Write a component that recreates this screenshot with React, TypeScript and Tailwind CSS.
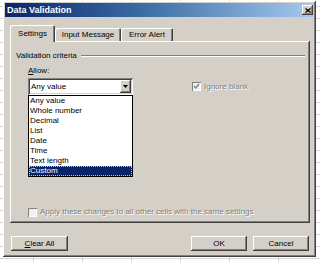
import React from "react";

const raised =
  "shadow-[inset_-1px_-1px_#404040,inset_1px_1px_#ffffff,inset_-2px_-2px_#808080,inset_2px_2px_#d4d0c8]";
const sunken =
  "shadow-[inset_1px_1px_#808080,inset_-1px_-1px_#ffffff,inset_2px_2px_#404040,inset_-2px_-2px_#d4d0c8]";

const options = [
  "Any value",
  "Whole number",
  "Decimal",
  "List",
  "Date",
  "Time",
  "Text length",
  "Custom",
];

const CheckBox = ({ checked }: { checked?: boolean }) => (
  <div
    className={`w-[9px] h-[9px] shrink-0 bg-[#f2f0ec] flex items-center justify-center shadow-[inset_1px_1px_#808080,inset_-1px_-1px_#ffffff]`}
  >
    {checked && (
      <svg width="7" height="7" viewBox="0 0 7 7">
        <polyline
          points="1,3 2.8,5 6,1"
          fill="none"
          stroke="#808080"
          strokeWidth="1.4"
        />
      </svg>
    )}
  </div>
);

const App = () => {
  return (
    <div className="w-[320px] h-[262px] overflow-hidden bg-white bg-[linear-gradient(to_right,#d4d4d4_1px,transparent_1px),linear-gradient(to_bottom,#d4d4d4_1px,transparent_1px)] bg-[size:49px_12px] bg-[position:33px_6px] pt-[1px] pl-[3px] font-['Liberation_Sans',Arial,sans-serif] text-[8px] leading-[10px] text-black">
      {/* Dialog */}
      <div
        className={`w-[313px] h-[256px] bg-[#d4d0c8] p-[2px] flex flex-col ${raised}`}
      >
        {/* Title bar */}
        <div className="h-[14px] flex items-center justify-between pl-[2px] pr-[1px] bg-[linear-gradient(to_right,#0a246a,#3a6ea5_45%,#a6caf0)]">
          <span className="text-white font-bold text-[9px]">Data Validation</span>
          <div
            className={`w-[11px] h-[10px] bg-[#d4d0c8] flex items-center justify-center ${raised}`}
          >
            <svg width="6" height="5" viewBox="0 0 6 5">
              <path d="M0.5 0.5 L5.5 4.5 M5.5 0.5 L0.5 4.5" stroke="#000" strokeWidth="1.3" />
            </svg>
          </div>
        </div>

        {/* Tabs */}
        <div className="mt-[9px] pl-[5px] pr-[4px]">
          <div className="flex items-end h-[15px]">
            <div className="relative z-10 -mb-px h-[17px] w-[45px] bg-[#d4d0c8] rounded-t-[2px] shadow-[inset_1px_1px_#ffffff,inset_-1px_0_#404040,inset_-2px_0_#808080] flex items-center justify-center">
              Settings
            </div>
            <div className="h-[13px] w-[66px] rounded-t-[2px] shadow-[inset_1px_1px_#ffffff,inset_-1px_0_#404040,inset_-2px_0_#808080] flex items-center justify-center">
              Input Message
            </div>
            <div className="h-[13px] w-[52px] rounded-t-[2px] shadow-[inset_1px_1px_#ffffff,inset_-1px_0_#404040,inset_-2px_0_#808080] flex items-center justify-center">
              Error Alert
            </div>
          </div>

          {/* Panel */}
          <div className={`h-[182px] pl-[6px] pr-[5px] pt-[10px] ${raised}`}>
            <div className="flex items-center gap-[4px]">
              <span>Validation criteria</span>
              <div className="flex-1 h-[2px] border-t border-[#808080] border-b border-b-white" />
            </div>

            <div className="pl-[12px] mt-[5px]">
              <div>
                <span className="underline">A</span>llow:
              </div>

              <div className="flex mt-[2px]">
                {/* Combo + list */}
                <div className="w-[105px]">
                  <div className={`h-[17px] bg-white flex items-center pl-[3px] pr-[2px] ${sunken}`}>
                    <span className="flex-1">Any value</span>
                    <div
                      className={`w-[11px] h-[13px] bg-[#d4d0c8] flex items-center justify-center ${raised}`}
                    >
                      <svg width="5" height="3" viewBox="0 0 5 3">
                        <path d="M0 0 H5 L2.5 3 Z" fill="#000" />
                      </svg>
                    </div>
                  </div>
                  <div className="bg-white border border-black">
                    {options.map((o) =>
                      o === "Custom" ? (
                        <div
                          key={o}
                          className="h-[10px] pl-[1px] bg-[#0a246a] text-white outline-1 outline-dotted outline-[#c8c890] -outline-offset-1"
                        >
                          {o}
                        </div>
                      ) : (
                        <div key={o} className="h-[10px] pl-[1px]">
                          {o}
                        </div>
                      )
                    )}
                  </div>
                </div>

                {/* Ignore blank */}
                <div className="ml-[59px] mt-[4px] flex items-center gap-[3px] h-[9px] text-[#808080]">
                  <CheckBox checked />
                  <span className="[text-shadow:1px_1px_#ffffff]">Ignore blank</span>
                </div>
              </div>

              <div className="mt-[30px] flex items-center gap-[3px] text-[#808080]">
                <CheckBox />
                <span className="[text-shadow:1px_1px_#ffffff]">
                  Apply these changes to all other cells with the same settings
                </span>
              </div>
            </div>
          </div>

          {/* Buttons */}
          <div className="flex mt-[13px] pl-[1px]">
            <div className={`w-[57px] h-[15px] flex items-center justify-center ${raised}`}>
              <span>
                <span className="underline">C</span>lear All
              </span>
            </div>
            <div className="flex-1" />
            <div className={`w-[56px] h-[15px] flex items-center justify-center ${raised}`}>
              OK
            </div>
            <div className={`ml-[6px] mr-[1px] w-[56px] h-[15px] flex items-center justify-center ${raised}`}>
              Cancel
            </div>
          </div>
        </div>
      </div>
    </div>
  );
};

export default App;
